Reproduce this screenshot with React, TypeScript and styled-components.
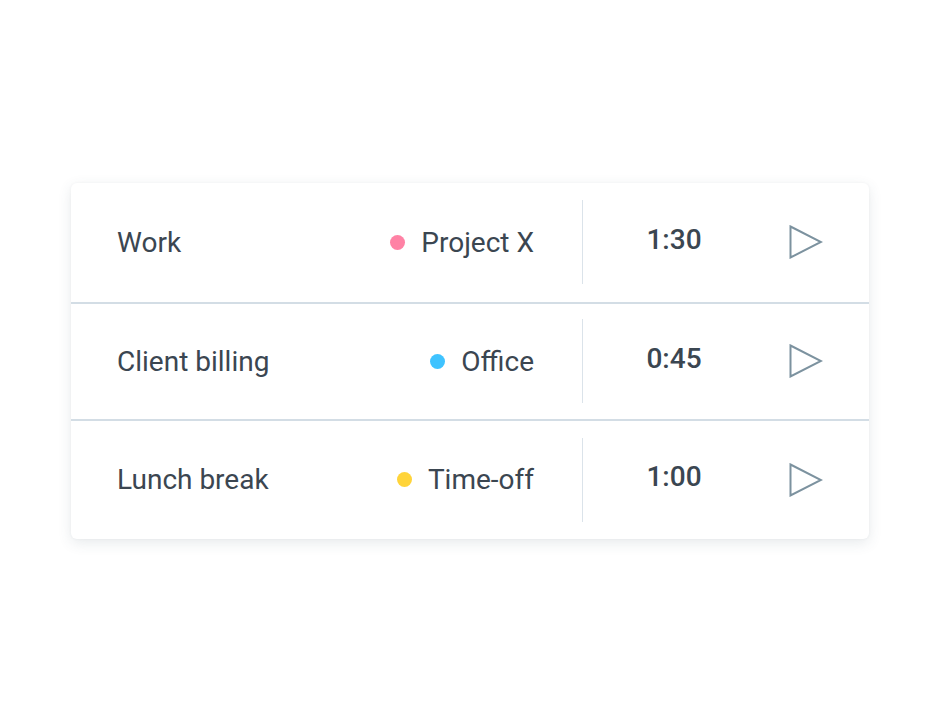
import React from 'react';
import styled, {createGlobalStyle} from "styled-components";

const GlobalStyle = createGlobalStyle`
  html, body {
    margin: 0;
    padding: 0;
    background: #ffffff;
  }
  body {
    font-family: Roboto, "Liberation Sans", Arial, sans-serif;
    color: #3b4651;
  }
`

type Entry = {
    name: string
    project: string
    color: string
    time: string
    height: number
}

const entries: Entry[] = [
    {name: 'Work', project: 'Project X', color: '#ff82a5', time: '1:30', height: 119},
    {name: 'Client billing', project: 'Office', color: '#3fc3ff', time: '0:45', height: 115},
    {name: 'Lunch break', project: 'Time-off', color: '#ffd43a', time: '1:00', height: 118},
]

const PlayIcon = () => (
    <svg width="34" height="34" viewBox="0 0 34 34" fill="none">
        <path d="M1.5 1.5 L32 17 L1.5 32.5 Z" stroke="#7c929f" strokeWidth="2" strokeLinejoin="miter"/>
    </svg>
)

export default function App() {
    return (
        <Page>
            <GlobalStyle/>
            <Card>
                {entries.map((e, i) => (
                    <Row key={e.name} $height={e.height} $last={i === entries.length - 1}>
                        <Main>
                            <Name>{e.name}</Name>
                            <Project>
                                <Dot $color={e.color}/>
                                {e.project}
                            </Project>
                        </Main>
                        <Divider/>
                        <Time>{e.time}</Time>
                        <PlayButton>
                            <PlayIcon/>
                        </PlayButton>
                    </Row>
                ))}
            </Card>
        </Page>
    );
}

const Page = styled.div`
  min-height: 100vh;
  display: flex;
  align-items: center;
  justify-content: center;
`

const Card = styled.div`
  width: 798px;
  background: #ffffff;
  border-radius: 6px;
  box-shadow: 0 4px 14px rgba(60, 80, 100, 0.12), 0 0 3px rgba(60, 80, 100, 0.05);
  overflow: hidden;
`

const Row = styled.div<{ $height: number, $last: boolean }>`
  display: flex;
  align-items: center;
  height: ${p => p.$height}px;
  padding: 0 46px 0 46px;
  border-bottom: ${p => p.$last ? 'none' : '2px solid #d3dde5'};
`

const Main = styled.div`
  flex: 1;
  display: flex;
  align-items: center;
  justify-content: space-between;
  padding-right: 48px;
  font-size: 28px;
  font-weight: 400;
`

const Name = styled.span`
  color: #3b4651;
`

const Project = styled.span`
  display: flex;
  align-items: center;
  gap: 16px;
  color: #3b4651;
`

const Dot = styled.span<{ $color: string }>`
  width: 15px;
  height: 15px;
  border-radius: 50%;
  background: ${p => p.$color};
`

const Divider = styled.div`
  width: 1px;
  height: 84px;
  background: #dbe3ea;
`

const Time = styled.div`
  width: 182px;
  text-align: center;
  font-size: 28px;
  font-weight: 500;
  color: #3b4651;
  margin-bottom: 6px;
`

const PlayButton = styled.div`
  margin-left: 24px;
  display: flex;
  align-items: center;
`
